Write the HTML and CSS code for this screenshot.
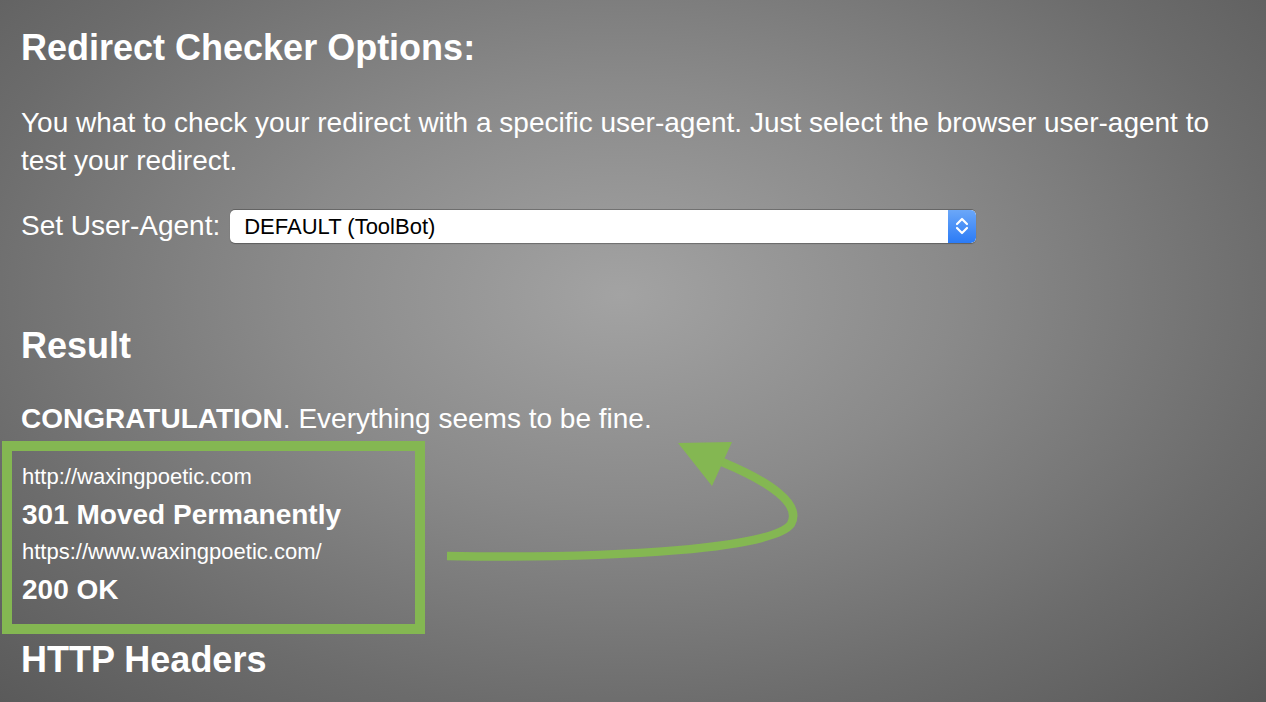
FILE: index.html
```html
<!DOCTYPE html>
<html lang="en">
<head>
    <meta charset="UTF-8">
    <meta name="viewport" content="width=device-width, initial-scale=1.0">
    <title>Redirect Checker</title>
    <link rel="stylesheet" href="styles.css">
</head>
<body>

<div class="page">
    <h2 class="title">Redirect Checker Options:</h2>
    <p class="intro">You what to check your redirect with a specific user-agent. Just select the browser user-agent to test your redirect.</p>

    <div class="agent-row">
        <label>Set User-Agent:</label>
        <div class="select">
            <span class="select-value">DEFAULT (ToolBot)</span>
            <span class="select-btn">
                <svg width="14" height="20" viewBox="0 0 14 20">
                    <path d="M2 8 L7 3 L12 8" fill="none" stroke="#fff" stroke-width="2.2" stroke-linecap="round" stroke-linejoin="round"/>
                    <path d="M2 12 L7 17 L12 12" fill="none" stroke="#fff" stroke-width="2.2" stroke-linecap="round" stroke-linejoin="round"/>
                </svg>
            </span>
        </div>
    </div>

    <h2 class="section">Result</h2>
    <p class="status"><b>CONGRATULATION</b>. Everything seems to be fine.</p>

    <div class="chain">
        <div class="url">http://waxingpoetic.com</div>
        <div class="code">301 Moved Permanently</div>
        <div class="url">https://www.waxingpoetic.com/</div>
        <div class="code">200 OK</div>
    </div>

    <h2 class="section headers">HTTP Headers</h2>

    <svg class="arrow" width="380" height="140" viewBox="440 430 380 140">
        <path d="M447 556 C620 559 775 548 791 524 C802 504 770 482 722 462" fill="none" stroke="#84b752" stroke-width="8.5"/>
        <polygon points="678,443 732,442 712,486" fill="#84b752"/>
    </svg>
</div>

</body>
</html>
```

FILE: styles.css
```css
html, body {
    margin: 0;
    height: 100%;
}
body {
    font-family: "Liberation Sans", Arial, sans-serif;
    color: #fff;
    background: radial-gradient(ellipse 75% 85% at 49% 42%, #a3a3a3 0%, #8a8a8a 35%, #6c6c6c 70%, #565656 100%);
    overflow: hidden;
}
.page {
    position: relative;
    padding: 0 22px 0 21px;
    height: 100%;
}
h2 {
    margin: 0;
    font-size: 36px;
    line-height: 42px;
    font-weight: bold;
}
.title {
    padding-top: 27px;
}
.intro {
    margin: 35px 0 0;
    font-size: 28px;
    line-height: 38px;
    padding-right: 30px;
}
.agent-row {
    display: flex;
    align-items: center;
    margin-top: 27px;
    font-size: 28px;
    line-height: 38px;
}
.agent-row label {
    margin-right: 10px;
}
.select {
    display: flex;
    width: 746px;
    height: 33px;
    background: #fff;
    border-radius: 5px;
    box-shadow: 0 -1px 0 rgba(0, 0, 0, 0.25), 0 1px 1px rgba(0, 0, 0, 0.3);
    overflow: hidden;
}
.select-value {
    flex: 1;
    color: #000;
    font-size: 22px;
    line-height: 33px;
    padding-left: 14px;
}
.select-btn {
    width: 28px;
    display: flex;
    align-items: center;
    justify-content: center;
    background: linear-gradient(#6ba7f8, #2b7bf6);
    border-radius: 0 5px 5px 0;
}
.section {
    margin-top: 80px;
}
.status {
    margin: 33px 0 0;
    font-size: 28px;
    line-height: 38px;
}
.chain {
    width: 393px;
    margin: 3px 0 0 -19px;
    padding: 8px 0 15px 10px;
    border: 10px solid #84b752;
}
.url {
    font-size: 22px;
    line-height: 36px;
}
.code {
    font-size: 28px;
    line-height: 39px;
    font-weight: bold;
}
.headers {
    margin-top: 5px;
}
.arrow {
    position: absolute;
    left: 440px;
    top: 430px;
}
```
